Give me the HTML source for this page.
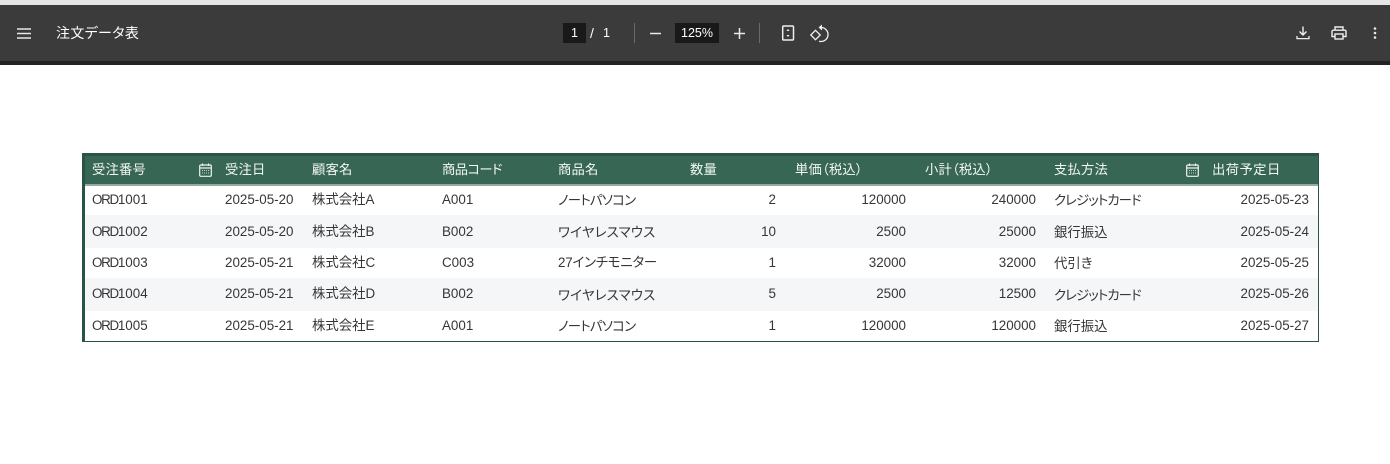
<!DOCTYPE html>
<html lang="ja"><head><meta charset="utf-8"><title>注文データ表</title>
<style>
html,body{margin:0;padding:0;width:1390px;height:464px;overflow:hidden;background:#fff}
body{position:relative;font-family:"Liberation Sans","Noto Sans CJK JP",sans-serif}
div,svg,span{position:absolute}
em{font-style:normal;letter-spacing:-1.3px}
.t,.r,.h{white-space:nowrap;line-height:20px;height:20px}
.t,.r{font-size:13.4px;color:#363636;font-feature-settings:"palt"}
.r{text-align:right;width:120px}
.h{font-size:13.3px;color:#f2f6f4;top:160px;letter-spacing:.2px}
.tb{color:#fff;font-size:12.5px;line-height:20px;white-space:nowrap}
.n{letter-spacing:-.7px}.c{letter-spacing:-.9px}.w{letter-spacing:.25px}.m{letter-spacing:-.2px}
</style></head><body>
<div style="left:0;top:0;width:1390px;height:5px;background:#e6e6e6"></div>
<div style="left:0;top:5px;width:1390px;height:56px;background:#3b3b3b"></div>
<div style="left:0;top:61px;width:1390px;height:4px;background:#242424"></div>

<svg style="left:17px;top:28px" width="14" height="11" viewBox="0 0 14 11"><path d="M0 1h14M0 5.5h14M0 10h14" stroke="#e8e8e8" stroke-width="1.5"/></svg>
<div class="tb" style="left:56px;top:23px;font-size:14px;font-feature-settings:'palt';letter-spacing:.35px">注文データ表</div>

<div style="left:563px;top:23px;width:23px;height:20px;background:#191919"></div>
<div class="tb" style="left:571px;top:23px">1</div>
<div class="tb" style="left:590px;top:23px;font-size:14px">/</div>
<div class="tb" style="left:603px;top:23px">1</div>
<div style="left:634px;top:23px;width:1px;height:20px;background:#6a6a6a"></div>
<svg style="left:650px;top:28px" width="11" height="11" viewBox="0 0 11 11"><path d="M0 5.5h11" stroke="#e8e8e8" stroke-width="1.5"/></svg>
<div style="left:675px;top:23px;width:44px;height:20px;background:#191919"></div>
<div class="tb" style="left:681px;top:23px">125%</div>
<svg style="left:734px;top:28px" width="11" height="11" viewBox="0 0 11 11"><path d="M0 5.5h11M5.5 0v11" stroke="#e8e8e8" stroke-width="1.5"/></svg>
<div style="left:759px;top:23px;width:1px;height:20px;background:#6a6a6a"></div>
<svg style="left:781px;top:25px" width="14" height="16" viewBox="0 0 14 16"><rect x="1.7" y="1" width="10.8" height="14" rx="1" fill="none" stroke="#efefef" stroke-width="1.5"/><path d="M7 4l-1.6 2h3.2zM7 12l-1.6-2h3.2z" fill="#efefef"/></svg>
<svg style="left:810px;top:24px" width="20" height="19" viewBox="0 0 20 19"><path d="M5.5 6.3l4.7 4.7-4.7 4.7-4.7-4.7z" fill="none" stroke="#efefef" stroke-width="1.3"/><path d="M11 3.5a7 7 0 1 1-2 13.7" fill="none" stroke="#efefef" stroke-width="1.3"/><path d="M12 .5l-3.5 3 3.5 3z" fill="#efefef"/></svg>

<svg style="left:1296px;top:26px" width="14" height="14" viewBox="0 0 14 14"><path d="M7 .5v8M3.5 5.5L7 9l3.5-3.5" fill="none" stroke="#efefef" stroke-width="1.4"/><path d="M1 10v2.6h12V10" fill="none" stroke="#efefef" stroke-width="1.3"/></svg>
<svg style="left:1331px;top:26px" width="16" height="14" viewBox="0 0 16 14"><path d="M4 4V1h8v3M4 10.5H1V5.5a1.3 1.3 0 0 1 1.3-1.3h11.4A1.3 1.3 0 0 1 15 5.5v5h-3" fill="none" stroke="#efefef" stroke-width="1.4"/><rect x="4" y="8" width="8" height="5" fill="none" stroke="#efefef" stroke-width="1.4"/></svg>
<svg style="left:1373px;top:27px" width="4" height="12" viewBox="0 0 4 12"><circle cx="2" cy="1.5" r="1.3" fill="#e8e8e8"/><circle cx="2" cy="6" r="1.3" fill="#e8e8e8"/><circle cx="2" cy="10.5" r="1.3" fill="#e8e8e8"/></svg>

<div style="left:82px;top:153px;width:1237px;height:189px;background:#fff"></div>
<div style="left:82px;top:156px;width:1237px;height:28px;background:#376754"></div>
<div style="left:82px;top:153px;width:1237px;height:3px;background:#2a5446"></div>
<div style="left:82px;top:184px;width:1237px;height:1.5px;background:#93aaa1"></div>
<div style="left:85px;top:215px;width:1233px;height:33px;background:#f5f6f8"></div>
<div style="left:85px;top:278px;width:1233px;height:33px;background:#f5f6f8"></div>
<div style="left:82px;top:153px;width:3px;height:189px;background:#2a5446"></div>
<div style="left:1318px;top:153px;width:1px;height:189px;background:#2a5446"></div>
<div style="left:82px;top:341px;width:1237px;height:1px;background:#2a5446"></div>

<span class="h" style="left:92px">受注番号</span>
<svg style="left:199px;top:163px" width="13" height="14" viewBox="0 0 13 14"><rect x=".7" y="2" width="11.6" height="11.3" rx="1" fill="none" stroke="#eef3f0" stroke-width="1.2"/><path d="M.7 5h11.6M3.5 .5v2.5M9.5 .5v2.5" stroke="#eef3f0" stroke-width="1.2"/><path d="M3 7.5h7M3 10h7" stroke="#c4d3cd" stroke-width="1" stroke-dasharray="1 1"/></svg>
<span class="h" style="left:225px">受注日</span>
<span class="h" style="left:312px">顧客名</span>
<span class="h" style="left:442px;font-feature-settings:'palt';letter-spacing:-.6px">商品コード</span>
<span class="h" style="left:558px">商品名</span>
<span class="h" style="left:690px">数量</span>
<span class="h" style="left:795px;font-feature-settings:'palt'">単価（税込）</span>
<span class="h" style="left:925px;font-feature-settings:'palt'">小計（税込）</span>
<span class="h" style="left:1054px">支払方法</span>
<svg style="left:1186px;top:163px" width="13" height="14" viewBox="0 0 13 14"><rect x=".7" y="2" width="11.6" height="11.3" rx="1" fill="none" stroke="#eef3f0" stroke-width="1.2"/><path d="M.7 5h11.6M3.5 .5v2.5M9.5 .5v2.5" stroke="#eef3f0" stroke-width="1.2"/><path d="M3 7.5h7M3 10h7" stroke="#c4d3cd" stroke-width="1" stroke-dasharray="1 1"/></svg>
<span class="h" style="left:1212px;letter-spacing:.45px">出荷予定日</span>

<span class="t" style="left:92px;top:190px"><em>ORD</em>1001</span><span class="t" style="left:225px;top:190px">2025-05-20</span><span class="t" style="left:312px;top:190px">株式会社A</span><span class="t" style="left:442px;top:190px">A001</span><span class="t n" style="left:558px;top:191px">ノートパソコン</span><span class="r" style="left:656px;top:190px">2</span><span class="r" style="left:786px;top:190px">120000</span><span class="r" style="left:916px;top:190px">240000</span><span class="t c" style="left:1054px;top:191px">クレジットカード</span><span class="r" style="left:1189px;top:190px">2025-05-23</span>

<span class="t" style="left:92px;top:222px"><em>ORD</em>1002</span><span class="t" style="left:225px;top:222px">2025-05-20</span><span class="t" style="left:312px;top:222px">株式会社B</span><span class="t" style="left:442px;top:222px">B002</span><span class="t w" style="left:558px;top:223px">ワイヤレスマウス</span><span class="r" style="left:656px;top:222px">10</span><span class="r" style="left:786px;top:222px">2500</span><span class="r" style="left:916px;top:222px">25000</span><span class="t" style="left:1054px;top:223px">銀行振込</span><span class="r" style="left:1189px;top:222px">2025-05-24</span>

<span class="t" style="left:92px;top:253px"><em>ORD</em>1003</span><span class="t" style="left:225px;top:253px">2025-05-21</span><span class="t" style="left:312px;top:253px">株式会社C</span><span class="t" style="left:442px;top:253px">C003</span><span class="t m" style="left:558px;top:253px">27インチモニター</span><span class="r" style="left:656px;top:253px">1</span><span class="r" style="left:786px;top:253px">32000</span><span class="r" style="left:916px;top:253px">32000</span><span class="t" style="left:1054px;top:254px">代引き</span><span class="r" style="left:1189px;top:253px">2025-05-25</span>

<span class="t" style="left:92px;top:284px"><em>ORD</em>1004</span><span class="t" style="left:225px;top:284px">2025-05-21</span><span class="t" style="left:312px;top:284px">株式会社D</span><span class="t" style="left:442px;top:284px">B002</span><span class="t w" style="left:558px;top:286px">ワイヤレスマウス</span><span class="r" style="left:656px;top:284px">5</span><span class="r" style="left:786px;top:284px">2500</span><span class="r" style="left:916px;top:284px">12500</span><span class="t c" style="left:1054px;top:286px">クレジットカード</span><span class="r" style="left:1189px;top:284px">2025-05-26</span>

<span class="t" style="left:92px;top:316px"><em>ORD</em>1005</span><span class="t" style="left:225px;top:316px">2025-05-21</span><span class="t" style="left:312px;top:316px">株式会社E</span><span class="t" style="left:442px;top:316px">A001</span><span class="t n" style="left:558px;top:317px">ノートパソコン</span><span class="r" style="left:656px;top:316px">1</span><span class="r" style="left:786px;top:316px">120000</span><span class="r" style="left:916px;top:316px">120000</span><span class="t" style="left:1054px;top:317px">銀行振込</span><span class="r" style="left:1189px;top:316px">2025-05-27</span>
</body></html>
